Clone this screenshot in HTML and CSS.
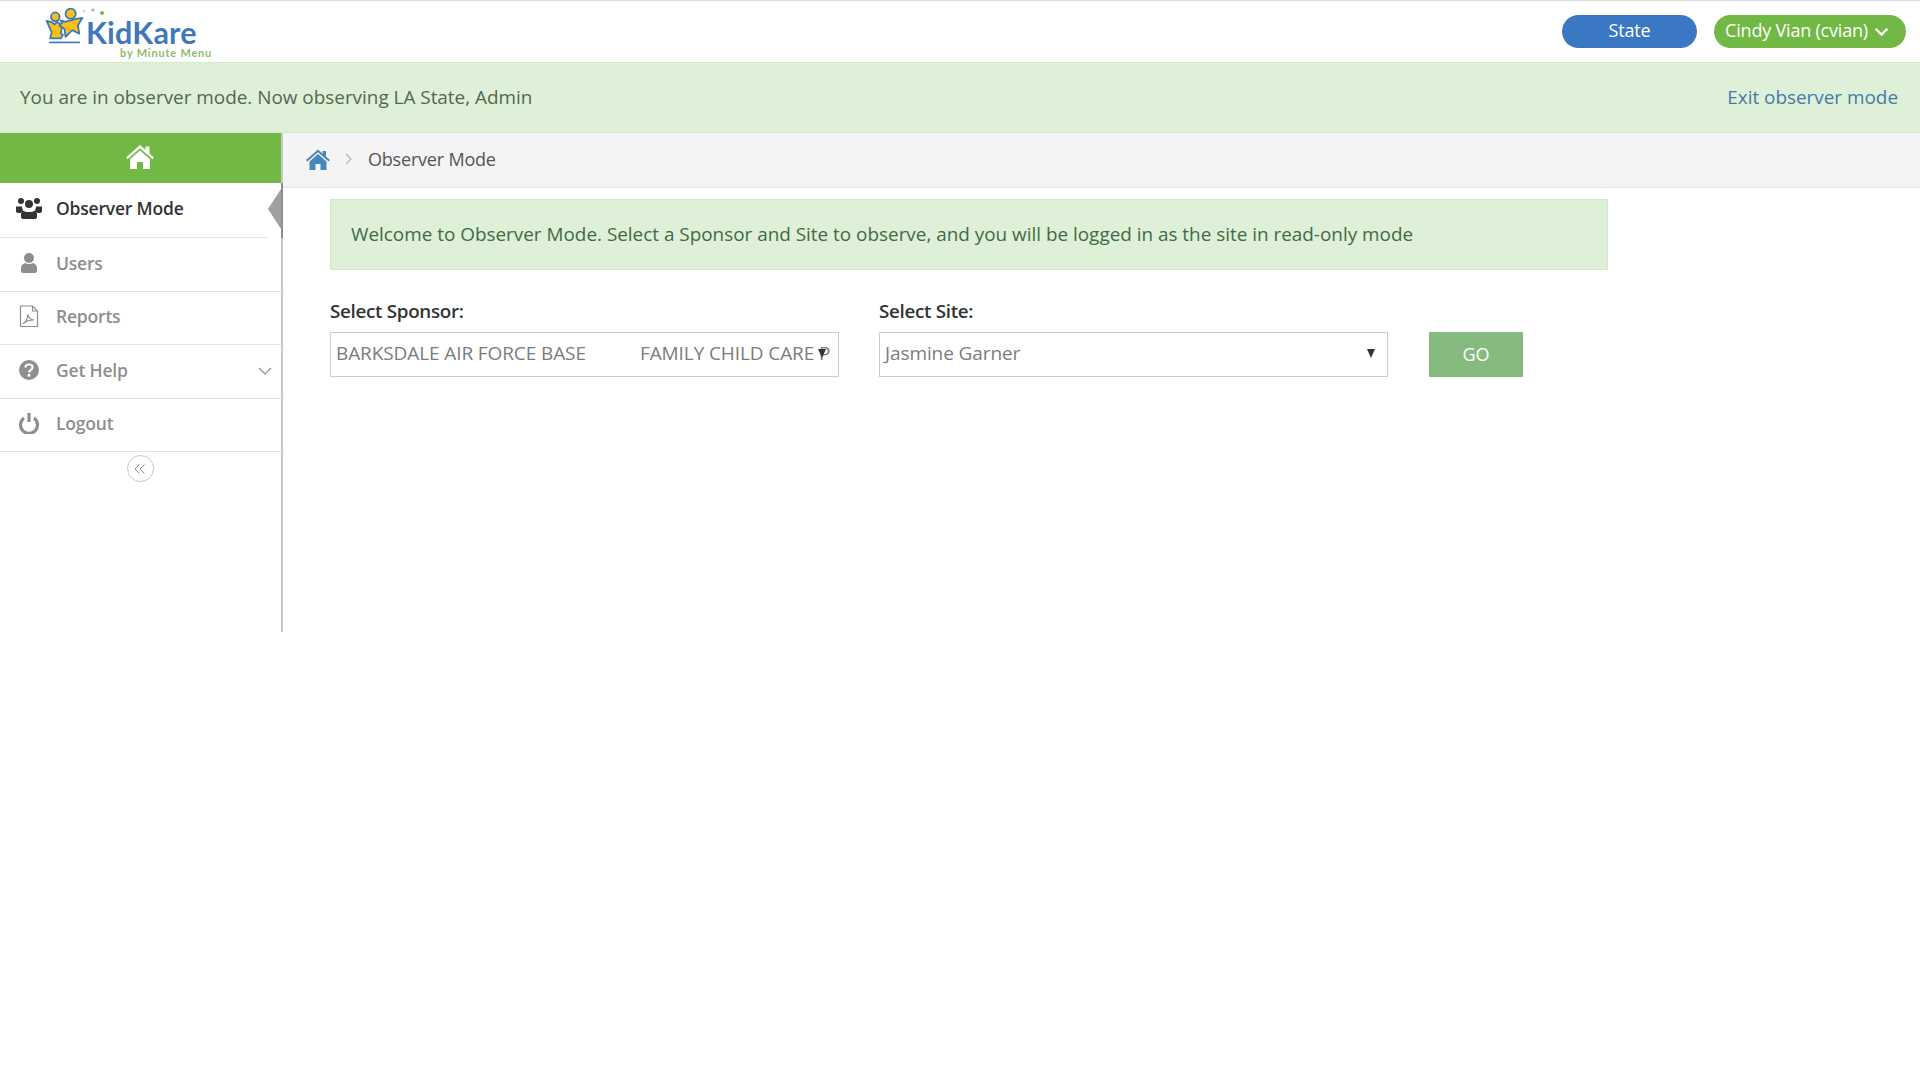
FILE: index.html
```html
<!DOCTYPE html>
<html lang="en">
<head>
<meta charset="utf-8">
<title>KidKare - Observer Mode</title>
<link rel="stylesheet" href="styles.css">
</head>
<body>
<header class="topbar">
  <a class="logo">
    <svg class="logo-mark" viewBox="0 0 40 36" width="41" height="37">
      <path d="M2.500 13.500 8 15l2 2 3-2.500 3 2 1.500 2-1 7.500 2 1-2 3.500H6l1.500-6z" fill="#fbbf16" stroke="#3a78bd" stroke-width="1.700" stroke-linejoin="round"/>
      <path d="M16 13l5 1.500 2.500-1 3.500-.5 2-1 8.500-1.500-4.500 7.500 1.500 8-7-3.500-6.500 6.500-1-7.500-5-3.500 3-3z" fill="#fbbf16" stroke="#3a78bd" stroke-width="1.700" stroke-linejoin="round"/>
      <circle cx="11" cy="9.500" r="4.200" fill="#fbbf16" stroke="#3a78bd" stroke-width="1.700"/>
      <circle cx="26" cy="6.500" r="5" fill="#fbbf16" stroke="#3a78bd" stroke-width="1.700"/>
      <path d="M5 34.500h30" stroke="#3a78bd" stroke-width="1.600"/>
    </svg>
    <svg class="logo-dots" viewBox="0 0 24 10" width="24" height="10">
      <circle cx="2" cy="4" r="1" fill="#b9c9a8"/><circle cx="11" cy="3" r="1.600" fill="#a5bd8a"/><circle cx="20" cy="6" r="2" fill="#72b74a"/>
    </svg>
    <span class="logo-text">
      <span class="logo-name">KidKare</span>
      <span class="logo-by">by Minute Menu</span>
    </span>
  </a>
  <div class="top-actions">
    <span class="pill pill-blue">State</span>
    <span class="pill pill-green">Cindy Vian (cvian)
      <svg class="pill-chev" viewBox="0 0 14 9" width="15" height="10"><path d="M1.500 1.500 7 7l5.500-5.500" fill="none" stroke="#fff" stroke-width="2.200"/></svg>
    </span>
  </div>
</header>

<div class="observer-banner">
  <span>You are in observer mode. Now observing LA State, Admin</span>
  <a class="exit-link">Exit observer mode</a>
</div>

<div class="layout">
  <aside class="sidebar">
    <div class="side-home">
      <svg viewBox="0 0 30 26" width="30" height="26"><path d="M15 1 1 13.500l1.500 1.700L15 4.200l12.500 11 1.500-1.700-4.500-4V2.500h-4v3.500z" fill="#fff"/><path d="M15 6.500 5 15.300V25h7v-7h6v7h7v-9.700z" fill="#fff"/></svg>
    </div>
    <nav class="side-nav">
      <a class="nav-item nav-active">
        <svg class="nav-icon" viewBox="0 0 26 22" width="26" height="22" fill="#333"><circle cx="5" cy="4" r="3"/><circle cx="21" cy="4" r="3"/><circle cx="13" cy="7" r="4"/><path d="M0 9.500h6a5 5 0 0 0 1 3.500l-2.500 3H2c-1 0-2-1-2-2zM26 9.500h-6a5 5 0 0 1-1 3.500l2.500 3H24c1 0 2-1 2-2zM7 13.500c1.500 1 3.500 1.500 6 1.500s4.500-.5 6-1.500c1.300.5 2 2 2 4V20c0 1-1 2-2 2H7c-1 0-2-1-2-2v-2.500c0-2 .7-3.500 2-4z"/></svg>
        <span>Observer Mode</span>
      </a>
      <a class="nav-item">
        <svg class="nav-icon" viewBox="0 0 26 22" width="26" height="22" fill="#8e8e8e"><circle cx="13" cy="6" r="5"/><path d="M5 19v-3.500c0-2.500 2-3.500 4-4.500 2.500 1.500 5.500 1.500 8 0 2 1 4 2 4 4.500V19c0 1-1 2-2 2H7c-1 0-2-1-2-2z"/></svg>
        <span>Users</span>
      </a>
      <a class="nav-item">
        <svg class="nav-icon" viewBox="0 0 26 22" width="26" height="22" fill="none" stroke="#8e8e8e" stroke-width="1.200"><path d="M4.500 1h12l5 5v15.500h-17z"/><path d="M16.500 1v5h5"/><path d="M7 18.500c3-1.500 4.500-5 5-9 .5 3 2 5 6 5.500-4-.3-7.500 1-11 3.500z"/></svg>
        <span>Reports</span>
      </a>
      <a class="nav-item">
        <svg class="nav-icon" viewBox="0 0 26 22" width="26" height="22"><circle cx="13" cy="11" r="10" fill="#8e8e8e"/><path d="M9.500 8.500c0-2 1.500-3 3.500-3s3.500 1.200 3.500 3c0 2.500-3.500 2.500-3.500 5" fill="none" stroke="#fff" stroke-width="2.200"/><rect x="11.700" y="15" width="2.600" height="2.600" fill="#fff"/></svg>
        <span>Get Help</span>
        <svg class="nav-chev" viewBox="0 0 14 8" width="14" height="8"><path d="M1 1l6 6 6-6" fill="none" stroke="#8e8e8e" stroke-width="1.200"/></svg>
      </a>
      <a class="nav-item">
        <svg class="nav-icon" viewBox="0 0 26 22" width="26" height="22" fill="none" stroke="#8e8e8e" stroke-width="3.200"><path d="M8 6a8.500 8.500 0 1 0 10 0"/><path d="M13 1v9"/></svg>
        <span>Logout</span>
      </a>
    </nav>
    <div class="collapse-row">
      <span class="collapse-btn">
        <svg viewBox="0 0 12 10" width="12" height="10"><path d="M5.500 0.500 1 5l4.500 4.500M10.500 0.500 6 5l4.500 4.500" fill="none" stroke="#8e8e8e" stroke-width="1"/></svg>
      </span>
    </div>
    <span class="active-marker"></span>
  </aside>

  <main class="content">
    <div class="breadcrumb">
      <svg class="crumb-home" viewBox="0 0 24 21" width="24" height="21"><path d="M12 .5 0 11l1.300 1.500L12 3.200l10.700 9.300L24 11l-4-3.500V2h-3.300v2.700z" fill="#4a87b8"/><path d="M12 5 3.500 12.400V21h6v-6h5v6h6v-8.600z" fill="#4a87b8"/></svg>
      <svg class="crumb-sep" viewBox="0 0 7 12" width="7" height="12"><path d="M1 1l5 5-5 5" fill="none" stroke="#b5b5b5" stroke-width="1.200"/></svg>
      <span>Observer Mode</span>
    </div>
    <div class="content-body">
      <div class="alert">Welcome to Observer Mode. Select a Sponsor and Site to observe, and you will be logged in as the site in read-only mode</div>
      <div class="form-row">
        <div class="field">
          <label class="field-label">Select Sponsor:</label>
          <div class="select">
            <span class="select-text"><span class="sponsor-name">BARKSDALE AIR FORCE BASE</span><span class="sponsor-type">FAMILY CHILD CARE P</span></span>
            <span class="caret"></span>
          </div>
        </div>
        <div class="field">
          <label class="field-label">Select Site:</label>
          <div class="select">
            <span class="select-text">Jasmine Garner</span>
            <span class="caret"></span>
          </div>
        </div>
        <button class="go-btn">GO</button>
      </div>
    </div>
  </main>
</div>
</body>
</html>
```

FILE: styles.css
```css
* { box-sizing: border-box; }

html, body {
  margin: 0;
  padding: 0;
  height: 100%;
  background: #fff;
  font-family: "Open Sans", "Liberation Sans", sans-serif;
  color: #333;
}

.topbar {
  height: 62px;
  border-top: 1px solid #d9d9d9;
  display: flex;
  align-items: center;
  justify-content: space-between;
  padding: 0 14px 0 44px;
}

.logo {
  position: relative;
  display: flex;
  align-items: flex-start;
  height: 52px;
}

.logo-mark { margin-top: 1px; flex: none; }

.logo-dots {
  position: absolute;
  left: 38px;
  top: 1px;
}

.logo-text {
  display: flex;
  flex-direction: column;
  margin-left: 1px;
}

.logo-name {
  font-family: "Lato", sans-serif;
  font-weight: 700;
  font-size: 30.500px;
  line-height: 29px;
  margin-top: 12px;
  color: #3f79bb;
  letter-spacing: 0.2px;
}

.logo-by {
  font-family: "Lato", sans-serif;
  font-weight: 700;
  font-size: 11px;
  line-height: 11px;
  margin-left: 34px;
  color: #8dbb6a;
  letter-spacing: 0.8px;
  white-space: nowrap;
}

.top-actions {
  display: flex;
  align-items: center;
  gap: 17px;
}

.pill {
  height: 33px;
  padding-bottom: 3px;
  border-radius: 17px;
  display: flex;
  align-items: center;
  justify-content: center;
  color: #fff;
  font-size: 18px;
  letter-spacing: -0.2px;
}

.pill-blue { width: 135px; background: #3b78c3; }
.pill-green {
  width: 192px;
  padding-right: 5.500px;
  background: #72b845;
  gap: 6.500px;
  letter-spacing: -0.2px;
}
.pill-chev { flex: none; margin-top: 3px; }

.observer-banner {
  height: 71px;
  padding: 0 22px 2px 20px;
  background: #dff0d8;
  border-top: 1px solid #d6e9c6;
  border-bottom: 1px solid #d6e9c6;
  display: flex;
  align-items: center;
  justify-content: space-between;
  font-size: 18.900px;
  color: #50694f;
}

.exit-link { color: #437aa8; }

.layout {
  display: flex;
  align-items: flex-start;
}

.sidebar {
  position: relative;
  width: 283px;
  height: 499px;
  flex: none;
  border-right: 2px solid #c8c8c8;
}

.side-home {
  height: 50px;
  background: #72b845;
  padding: 0 2px 2px 0;
  display: flex;
  align-items: center;
  justify-content: center;
}

.nav-item {
  height: 53.500px;
  display: flex;
  align-items: center;
  padding-left: 16px;
  padding-bottom: 3px;
  border-bottom: 1px solid #e3e3e3;
  font-size: 17.500px;
  font-weight: 600;
  color: #8e8e8e;
  letter-spacing: -0.2px;
}

.nav-item span { margin-left: 14px; }

.nav-active { height: 55px; padding-bottom: 4px; color: #333; }

.nav-chev { margin-left: auto; margin-right: 9px; margin-top: 3px; }

.nav-icon { flex: none; }

.collapse-row {
  display: flex;
  justify-content: center;
  padding: 3px 1px 0 0;
}

.collapse-btn {
  width: 27px;
  height: 27px;
  border-radius: 50%;
  border: 1px solid #c6c6c6;
  display: flex;
  align-items: center;
  justify-content: center;
}

.active-marker {
  position: absolute;
  top: 50px;
  right: -2px;
  width: 15px;
  height: 55px;
  background: #fff;
  border-right: 2px solid #8e8e8e;
}

.active-marker::after {
  content: "";
  position: absolute;
  right: 0;
  top: 6px;
  border-style: solid;
  border-width: 20px 13px 20px 0;
  border-color: transparent #a0a0a0 transparent transparent;
}

.content {
  flex: 1;
  min-width: 0;
}

.breadcrumb {
  height: 55px;
  padding: 0 0 2px 23px;
  background: #f4f4f4;
  border-bottom: 1px solid #e6e6e6;
  display: flex;
  align-items: center;
  font-size: 18px;
  color: #555;
  letter-spacing: -0.2px;
}

.crumb-sep { margin: 0 16px 0 15px; }

.content-body {
  padding: 11px 0 0 47px;
  width: 1325px;
}

.alert {
  height: 71px;
  padding: 0 0 2px 20px;
  background: #dff0d8;
  border: 1px solid #d6e9c6;
  display: flex;
  align-items: center;
  font-size: 18.900px;
  color: #3f6b45;
}

.form-row {
  display: flex;
  align-items: flex-end;
  margin-top: 28px;
  gap: 40px;
}

.field {
  width: 509px;
  flex: none;
}

.field-label {
  display: block;
  font-size: 18.800px;
  font-weight: 600;
  line-height: 27px;
  margin-bottom: 7px;
  letter-spacing: -0.3px;
  color: #333;
}

.select {
  position: relative;
  height: 45px;
  padding: 0 0 3px 5px;
  border: 1px solid #ccc;
  display: flex;
  align-items: center;
  overflow: hidden;
}

.select-text {
  display: flex;
  font-size: 19px;
  color: #7c7c7c;
  white-space: nowrap;
  letter-spacing: -0.1px;
}

.sponsor-name { width: 304px; }

.caret {
  position: absolute;
  right: 12px;
  top: 16px;
  width: 0;
  height: 0;
  border-style: solid;
  border-width: 9px 4.500px 0 4.500px;
  border-color: #333 transparent transparent transparent;
}

.go-btn {
  width: 94px;
  height: 45px;
  margin-left: 1px;
  border: 0;
  padding: 0 0 2px;
  background: #85bb7f;
  color: #fff;
  font-family: inherit;
  font-size: 18px;
}
```
